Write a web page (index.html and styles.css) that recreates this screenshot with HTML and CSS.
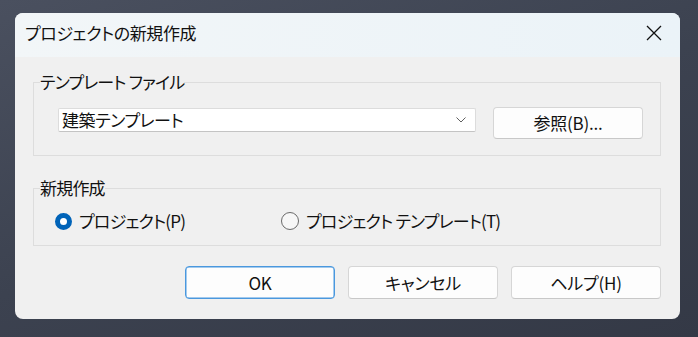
FILE: index.html
```html
<!DOCTYPE html>
<html lang="ja">
<head>
<meta charset="utf-8">
<title>プロジェクトの新規作成</title>
<link rel="stylesheet" href="styles.css">
</head>
<body>
<div class="dialog">
  <div class="titlebar">
    <span class="title">プロジェクトの新規作成</span>
    <span class="close">
      <svg width="16" height="16" viewBox="0 0 16 16"><path d="M1 1 L15 15 M15 1 L1 15" stroke="#111" stroke-width="1.3" fill="none"/></svg>
    </span>
  </div>
  <div class="content">
    <fieldset class="group group-file">
      <legend>テンプレート ファイル</legend>
      <div class="file-row">
        <div class="combo">
          <span class="combo-text">建築テンプレート</span>
          <svg class="chevron" width="10" height="6" viewBox="0 0 10 6"><path d="M0.5 0.5 L5 5 L9.5 0.5" stroke="#5f5f5f" stroke-width="1" fill="none"/></svg>
        </div>
        <button class="btn browse">参照(B)...</button>
      </div>
    </fieldset>
    <fieldset class="group group-new">
      <legend>新規作成</legend>
      <div class="radio-row">
        <label class="radio-item"><span class="radio checked"></span><span>プロジェクト(P)</span></label>
        <label class="radio-item"><span class="radio"></span><span>プロジェクト テンプレート(T)</span></label>
      </div>
    </fieldset>
    <div class="actions">
      <button class="btn default">OK</button>
      <button class="btn">キャンセル</button>
      <button class="btn">ヘルプ(H)</button>
    </div>
  </div>
</div>
</body>
</html>
```

FILE: styles.css
```css
html, body {
  margin: 0;
  padding: 0;
}
body {
  width: 698px;
  height: 337px;
  overflow: hidden;
  background: linear-gradient(160deg, #4a505f 0%, #3c4250 50%, #343946 100%);
  font-family: "Noto Sans CJK JP", "Noto Sans", sans-serif;
  font-feature-settings: "palt";
  color: #111111;
}
.dialog {
  margin: 13px 0 0 15px;
  width: 665px;
  height: 306px;
  border-radius: 8px;
  background: #f0f0f0;
  display: flex;
  flex-direction: column;
  overflow: hidden;
}
.titlebar {
  height: 44px;
  flex: none;
  background: linear-gradient(90deg, #f2f6f8 0%, #ebf3f8 100%);
  display: flex;
  align-items: center;
  justify-content: space-between;
  padding: 0 18px 0 10px;
}
.title {
  font-size: 17px;
  letter-spacing: -0.4px;
  line-height: 20px;
  padding-bottom: 4px;
}
.close {
  display: flex;
  width: 16px;
  height: 16px;
  margin-bottom: 4px;
}
.content {
  padding: 16px 19px 0 18px;
  display: flex;
  flex-direction: column;
}
.group {
  margin: 0;
  border: 1px solid #dddddd;
  padding: 0 17px 16px 6px;
  min-width: 0;
}
.group legend {
  padding: 0;
  font-size: 17px;
  letter-spacing: -0.8px;
  line-height: 18px;
}
.file-row {
  display: flex;
  align-items: flex-start;
  margin-top: 16px;
}
.combo {
  margin: 1px 0 0 18px;
  width: 418px;
  height: 24px;
  box-sizing: border-box;
  background: #ffffff;
  border: 1px solid #dcdcdc;
  border-bottom-color: #c4c4c4;
  border-radius: 2px;
  display: flex;
  align-items: center;
  justify-content: space-between;
  padding: 0 9px 0 3px;
}
.combo-text {
  font-size: 17px;
  letter-spacing: -0.4px;
  line-height: 20px;
}
.chevron {
  display: block;
}
.btn {
  font-family: "Noto Sans CJK JP", "Noto Sans", sans-serif;
  font-feature-settings: "palt";
  font-size: 17px;
  letter-spacing: -0.2px;
  color: #111111;
  width: 150px;
  height: 33px;
  box-sizing: border-box;
  background: #fdfdfd;
  border: 1px solid #d6d6d6;
  border-bottom-color: #c8c8c8;
  border-radius: 4px;
  padding: 0;
  line-height: 20px;
}
.browse {
  margin-left: 17px;
  height: 32px;
}
.group-new {
  margin-top: 23px;
  padding-bottom: 15px;
}
.radio-row {
  display: grid;
  grid-template-columns: 226px auto;
  margin-top: 15px;
  padding-left: 15px;
  height: 18px;
  align-items: center;
}
.radio-item {
  display: flex;
  align-items: center;
  gap: 7px;
  font-size: 17px;
  letter-spacing: -0.8px;
  line-height: 18px;
}
.radio {
  width: 18px;
  height: 18px;
  box-sizing: border-box;
  border-radius: 50%;
  border: 1px solid #6a6a6a;
  background: #f7f7f7;
  flex: none;
}
.radio.checked {
  width: 17px;
  height: 17px;
  border: 5px solid #0063b8;
  background: #ffffff;
}
.actions {
  margin-top: 20px;
  display: flex;
  justify-content: flex-end;
  gap: 13px;
}
.btn.default {
  border: 1px solid #4a98de;
  box-shadow: inset 0 0 0 0.5px #4a98de;
}
```
